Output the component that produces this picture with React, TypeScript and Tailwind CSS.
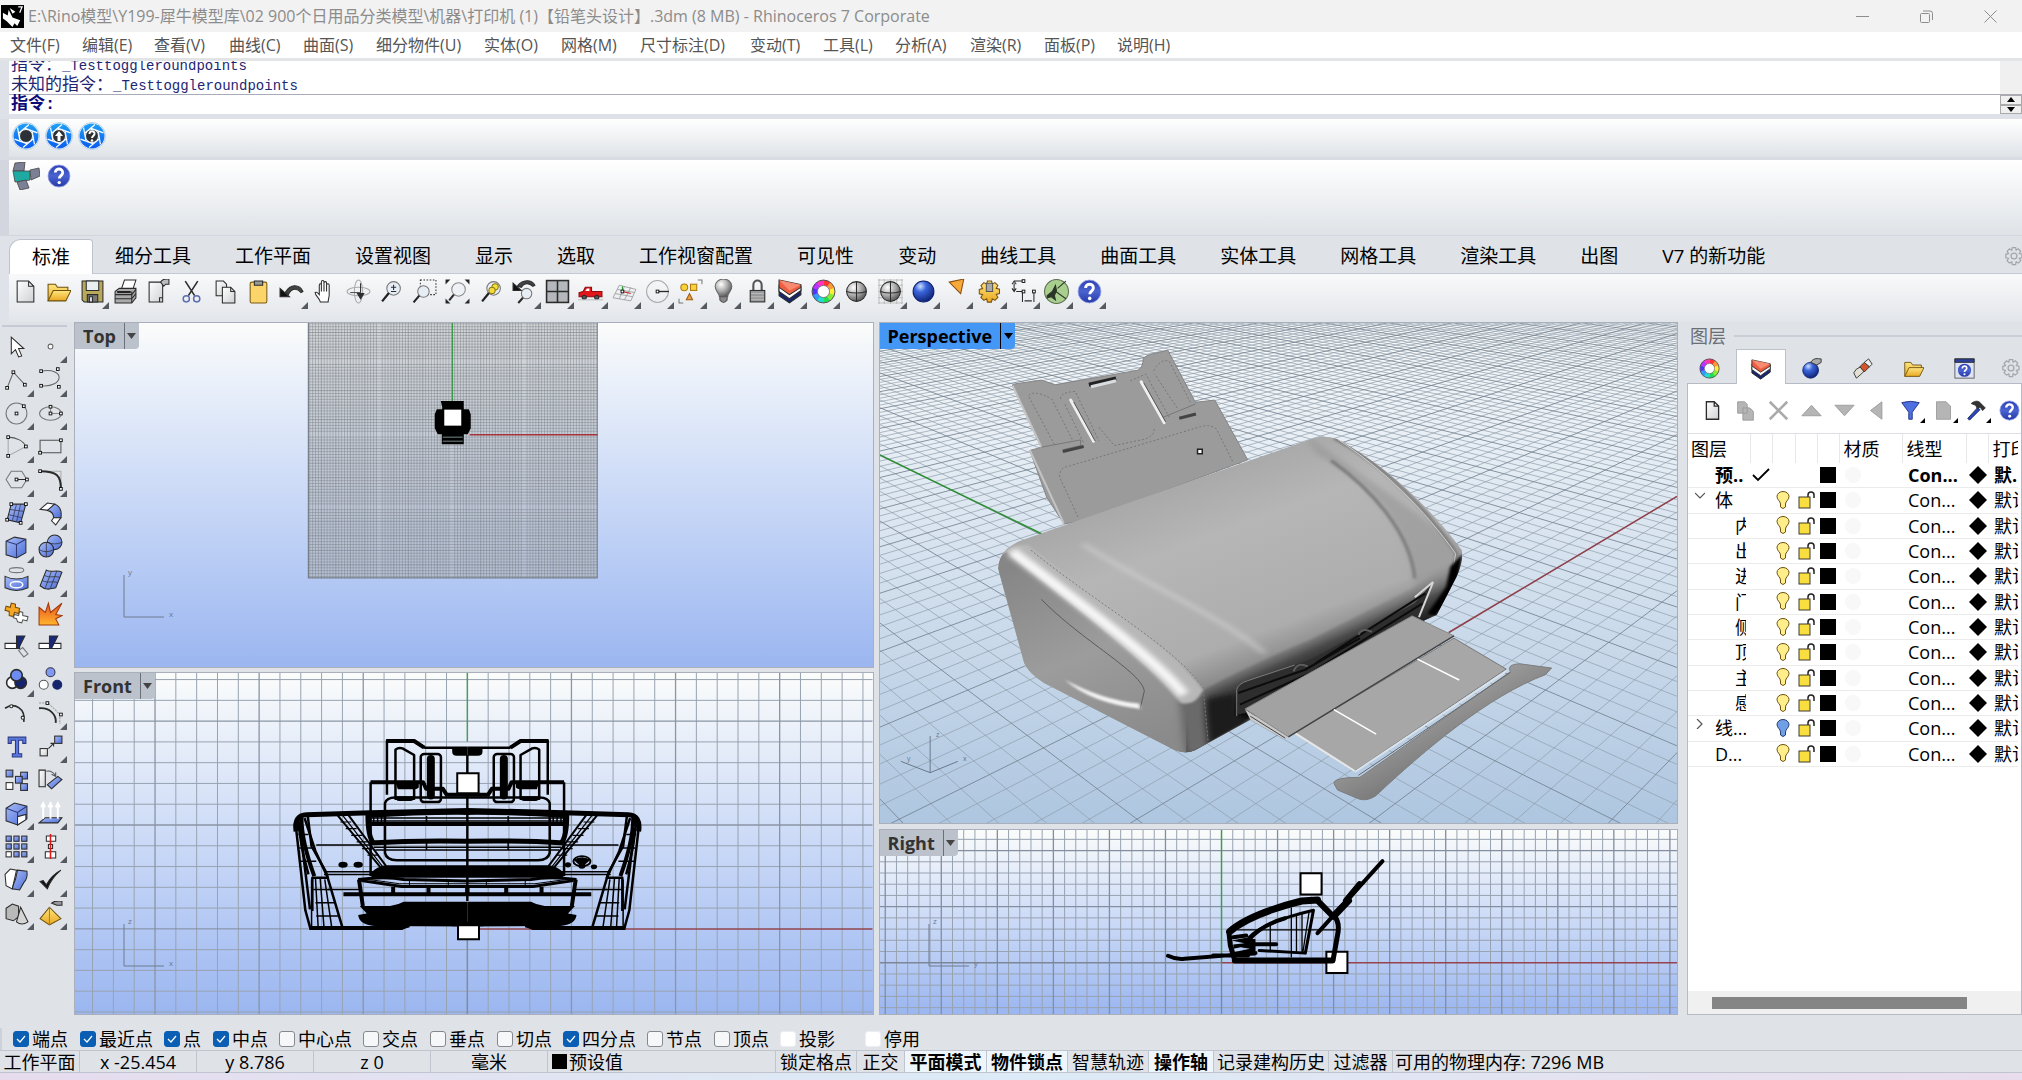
import React from "react";

type Kids = { children?: React.ReactNode };

const INK = "#3a3a3a";
const OUTLINE = "#2b2b2b";

/* ---------- icon helpers ---------- */

function Ic({ children, size = 26 }: Kids & { size?: number }) {
  return (
    <svg width={size} height={size} viewBox="0 0 24 24" fill="none" stroke={OUTLINE} strokeWidth="1" aria-hidden="true">
      {children}
    </svg>
  );
}

function N({ x, y }: { x: number; y: number }) {
  return <rect x={x - 1.3} y={y - 1.3} width="2.6" height="2.6" fill="#fff" stroke="#111" strokeWidth="0.9" />;
}

function SharedDefs() {
  return (
    <svg className="absolute size-0" aria-hidden="true">
      <defs>
        <linearGradient id="paper" x1="0" y1="0" x2="1" y2="1">
          <stop offset="0" stopColor="#fff" />
          <stop offset="1" stopColor="#cfd1d4" />
        </linearGradient>
        <linearGradient id="gold" x1="0" y1="0" x2="0" y2="1">
          <stop offset="0" stopColor="#ffe680" />
          <stop offset="1" stopColor="#e9a820" />
        </linearGradient>
        <linearGradient id="blue" x1="0" y1="0" x2="1" y2="1">
          <stop offset="0" stopColor="#a9bdf7" />
          <stop offset="1" stopColor="#4b6cd8" />
        </linearGradient>
        <linearGradient id="fire" x1="0" y1="0" x2="0" y2="1">
          <stop offset="0" stopColor="#e8501c" />
          <stop offset="1" stopColor="#ffb52e" />
        </linearGradient>
        <radialGradient id="ball" cx="0.35" cy="0.3" r="0.8">
          <stop offset="0" stopColor="#fff" />
          <stop offset="0.5" stopColor="#a9a9a9" />
          <stop offset="1" stopColor="#444" />
        </radialGradient>
        <radialGradient id="blueball" cx="0.35" cy="0.25" r="0.8">
          <stop offset="0" stopColor="#cfe0ff" />
          <stop offset="0.35" stopColor="#3b66dd" />
          <stop offset="1" stopColor="#0c1f70" />
        </radialGradient>
        <linearGradient id="help" x1="0" y1="0" x2="0" y2="1">
          <stop offset="0" stopColor="#2c3fb4" />
          <stop offset="0.5" stopColor="#4a63cf" />
          <stop offset="1" stopColor="#2338a8" />
        </linearGradient>
        <linearGradient id="lens" x1="0" y1="0" x2="0" y2="1">
          <stop offset="0" stopColor="#1fa0f5" />
          <stop offset="1" stopColor="#0a5df0" />
        </linearGradient>
      </defs>
    </svg>
  );
}

const magnifier = (
  <>
    <circle cx="14" cy="9" r="6.5" fill="#e6edf5" stroke="#777" strokeWidth="1" />
    <path d="M9.5 13.5 3 21.5" stroke="#222" strokeWidth="2.2" />
  </>
);
const page = <path d="M4 2h11l5 5v15H4z M15 2v5h5" fill="url(#paper)" />;
const helpMark = (
  <>
    <circle cx="12" cy="12" r="11" fill="url(#help)" stroke="#9aa6e6" strokeWidth="0.8" />
    <path d="M8.3 8.6c0-5 7.6-4.6 7.4 0-.1 3-3.4 3-3.4 6" stroke="#fff" strokeWidth="2.8" />
    <circle cx="12.2" cy="18.6" r="1.7" fill="#fff" stroke="none" />
  </>
);
const layersMark = (
  <>
    <path d="M1 9v7l10 7 11-8V9z" fill="#18246e" />
    <path d="M1 6v6l10 7 11-8V7z" fill="#fff" />
    <path d="M1 1 22 5.500V8l-11 7L1 8z" fill="#ee5f42" />
    <path d="M1 1 22 5.500 11 11z" fill="#f98a72" stroke="none" />
  </>
);
const wheel = (
  <>
    {["#f33", "#f93", "#fe3", "#8e3", "#2d5", "#2dc", "#39f", "#53f", "#b3f", "#f3b"].map((c, i) => {
      const a = (i * Math.PI) / 5 - Math.PI / 2;
      const b = a + Math.PI / 5 + 0.05;
      const p = (t: number) => `${12 + 8.3 * Math.cos(t)} ${12 + 8.3 * Math.sin(t)}`;
      return <path key={c} d={`M${p(a)}A8.3 8.3 0 0 1 ${p(b)}`} stroke={c} strokeWidth="5" />;
    })}
    <circle cx="12" cy="12" r="11" stroke="#333" strokeWidth="0.8" />
    <circle cx="12" cy="12" r="5.8" fill="#fff" stroke="#555" strokeWidth="0.7" />
  </>
);
const folder = (
  <>
    <path d="M2 21V5h7l2 3h10v4" fill="url(#gold)" stroke="#6b5010" />
    <path d="M2 21 7 11h17l-5 10z" fill="url(#gold)" stroke="#6b5010" />
  </>
);
const sphere = (
  <>
    <circle cx="12" cy="12" r="9.5" fill="url(#ball)" />
    <path d="M12 2.5v19M2.5 12q9.5 3 19 0" />
  </>
);
const gearTeeth = "M10 2h4l.6 3 2.6-1.6 2.8 2.8L18.400 9l3.200.8v4.200l-3.200.8 1.700 2.800-2.900 2.900L14.600 19l-.7 3.200H10L9.300 19l-2.700 1.500-2.900-2.800L5.400 15 2.200 14.200V10l3.200-.8L3.800 6.300l2.800-2.900L9.300 5z";

const standardIcons: { name: string; menu?: boolean; art: React.ReactNode }[] = [
  { name: "新建", art: page },
  { name: "打开", art: folder },
  { name: "保存", menu: true, art: <><path d="M2 2h20v20H4l-2-2z" fill="#b8a85a" /><path d="M6 2h12v9H6z" fill="#e8edf0" /><path d="M7 15h10v7H7z" fill="#777" /><path d="M9 17h3v5H9z" fill="#ddd" /></> },
  { name: "打印", art: <><path d="M8 10 11 1h11l-3 9z" fill="#fff" /><path d="M2 12 6 9h16v9l-4 5H2z" fill="#aaa" /><path d="M2 15h16l4-5M2 19h16l4-5M18 12v11" /><path d="M4 12.500h13" stroke="#222" strokeWidth="2" /></> },
  { name: "导出", art: <><path d="M3 3h13v19H3z" fill="url(#paper)" /><path d="M13 22v-4h3" /><path d="M14 3c2-4 6-3 8-3v5h-3l-2 2z" fill="#bbb" /></> },
  { name: "剪切", art: <><path d="M6 2l9 14M18 2 9 16" strokeWidth="1.500" /><circle cx="7" cy="19" r="3" stroke="#5c6cae" strokeWidth="1.400" /><circle cx="17" cy="19" r="3" stroke="#5c6cae" strokeWidth="1.400" /></> },
  { name: "复制", art: <><path d="M3 2h7l3 3v11H3z" fill="url(#paper)" /><path d="M9 8h8l4 4v11H9z" fill="url(#paper)" /><path d="M17 8v4h4" /></> },
  { name: "粘贴", art: <><rect x="4" y="3" width="16" height="20" rx="1.500" fill="#fbd569" stroke="#7a5a10" /><path d="M8 6V2h8v4z" fill="#999" /></> },
  { name: "撤销", menu: true, art: <><path d="M6 13c5-9 14-8 17-1l-2 1c-4-5-9-4-12 2z" fill="#444" /><path d="M1 9v8h9z" fill="#111" /></> },
  { name: "平移", art: <path d="M8 22c-1-4-5-6-5-9 2-1 3 1 4 2V6c0-2 2-2 2 0V3c0-2 2.500-2 2.500 0v1c0-2 2.500-2 2.500 0v2c0-2 2.500-2 2.500 0v9c0 3-1 4-1 7zM9 6v6M11.500 4v8M14 6v6" fill="#fff" /> },
  { name: "旋转", art: <><ellipse cx="12" cy="12" rx="4" ry="11" stroke="#aaa" /><ellipse cx="12" cy="12" rx="11" ry="4" stroke="#aaa" /><path d="M14 4v12M11 14l3 5 3-5z" fill="#333" /><path d="M4 13h10" stroke="#555" /></> },
  { name: "缩放", art: <>{magnifier}<path d="M14 5.500v5M11.500 8h5M11.500 12h5" /></> },
  { name: "框选缩放", art: <><rect x="8" y="1" width="15" height="14" strokeDasharray="1.500 1.500" /><circle cx="11" cy="12" r="5.500" fill="#e6edf5" stroke="#777" /><path d="M7 16 1.500 22.500" stroke="#222" strokeWidth="2" /></> },
  { name: "缩放至最大范围", art: <><circle cx="13" cy="10" r="6.500" fill="#eef2f6" stroke="#888" /><path d="M8.500 15 4 20.500" strokeWidth="2" /><path d="M1 4V1h3zM20 1h3v3zM1 20v3h3zM23 20v3h-3z" fill="#111" /></> },
  { name: "缩放至选取", art: <>{magnifier}<circle cx="15.500" cy="7.500" r="3" fill="#f6e13a" stroke="#8a7a10" /><circle cx="12.500" cy="11" r="3" fill="#f6d93a" stroke="#8a7a10" /></> },
  { name: "撤销视图", menu: true, art: <><path d="M5 7c5-7 14-7 17-1l-2 1c-4-4-9-3-11 1z" fill="#444" /><path d="M1 4v7h8z" fill="#111" /><circle cx="14" cy="14" r="5" fill="#e6edf5" stroke="#777" /><path d="M10.500 18 6 23" strokeWidth="2" /></> },
  { name: "四视图", menu: true, art: <><rect x="1.500" y="1.500" width="21" height="21" fill="#b4b8bc" strokeWidth="1.500" /><path d="M12 2v20M2 12h20" strokeWidth="1.500" /></> },
  { name: "汽车", menu: true, art: <><path d="M1 17v-4l4-1 2-4h6v4h10v5z" fill="#e3161c" stroke="#8e0b0f" /><path d="M7 11.500 8.500 9H11v2.500z" fill="#fff" stroke="none" /><circle cx="6" cy="17.500" r="2" fill="#555" /><circle cx="18" cy="17.500" r="2" fill="#555" /><path d="M0 20h24" stroke="#bbb" /></> },
  { name: "工作平面", menu: true, art: <><path d="M1 18 7 6l16 4-5 11zM3 14l17 3M5 10l17 3M7 19l5-12M12 20l6-12" stroke="#999" strokeWidth="0.800" /><path d="M10 12V7" stroke="#1a9a2b" /><path d="M10 12l8 2" stroke="#c22" /><N x={10} y={12} /></> },
  { name: "选项", menu: true, art: <><circle cx="12" cy="12" r="10.500" stroke="#aaa" /><path d="M12 12h11" strokeWidth="1.300" /><N x={12} y={12} /></> },
  { name: "选取", menu: true, art: <><circle cx="6" cy="8" r="3.300" fill="#f7d23c" stroke="#b07a10" /><rect x="12" y="5" width="6" height="6" fill="#f7d23c" stroke="#b07a10" /><path d="M11 14l3 6H8z" fill="#eaa33c" stroke="#9a5a10" /><path d="M19 1h4v4M1 19v4h4" stroke="#777" /></> },
  { name: "隐藏", menu: true, art: <><path d="M8 17c0-4-4-5-4-10a8 7 0 0 1 16 0c0 5-4 6-4 10z" fill="url(#ball)" stroke="#666" /><path d="M8.500 17h7v3q-3.500 5-7 0z" fill="#888" stroke="#555" /></> },
  { name: "锁定", menu: true, art: <><path d="M8 11V6c0-6 8-6 8 0v5" strokeWidth="2" stroke="#555" /><rect x="5" y="11" width="14" height="11" fill="#999" /><path d="M6 14h12M6 17h12M6 20h12" stroke="#bbb" /></> },
  { name: "图层", menu: true, art: layersMark },
  { name: "颜色", menu: true, art: wheel },
  { name: "着色", art: sphere },
  { name: "网格着色", menu: true, art: <><path d="M0 1h24M0 6h24M0 12h24M0 18h24M0 23h24M1 0v24M6 0v24M12 0v24M18 0v24M23 0v24" stroke="#b5b5b5" strokeWidth="0.800" />{sphere}</> },
  { name: "渲染", menu: true, art: <circle cx="12" cy="12" r="10" fill="url(#blueball)" stroke="#0c1f70" /> },
  { name: "指向", menu: true, art: <path d="M5 3 19 0l-3 14z" fill="#f7a93a" stroke="#8a4d10" /> },
  { name: "设置", menu: true, art: <><path d={gearTeeth} fill="url(#gold)" stroke="#7a5210" /><path d="M9 4h6v8H9z" fill="#aaa" stroke="#555" /></> },
  { name: "尺寸标注", menu: true, art: <><path d="M3 2h9M3 12v-8M1 5l2-3 2 3M1 9l2 3 2-3M5 12h6v10M13 21h7M22 12v10" /><N x={12} y={2} /><N x={12} y={12} /><N x={22} y={12} /></> },
  { name: "Grasshopper", menu: true, art: <><circle cx="12" cy="12" r="11.500" fill="#a9cf8e" stroke="#5b6d50" /><path d="M13 9 21 2M10 11l11 8" stroke="#2c3628" /><path d="M3 16l5-4 3-6 1 5-2 5 1 4-4-3-4 1z" stroke="#2c3628" fill="#2c3628" /></> },
  { name: "说明", menu: true, art: helpMark },
];

const sideIcons: { name: string; menu?: boolean; art: React.ReactNode }[] = [
  { name: "选取", art: <path d="M7 3v16l4-4 3 7 3-1-3-7h5z" fill="#fff" /> },
  { name: "点", menu: true, art: <circle cx="12" cy="12" r="2.300" fill="#fff" stroke="#666" /> },
  { name: "多段线", menu: true, art: <><path d="M3 20 9 5l11 12" stroke="#666" /><N x={3} y={20} /><N x={9} y={5} /><N x={20} y={17} /></> },
  { name: "曲线", menu: true, art: <><path d="M3 4c24-4 22 16 0 14" stroke="#666" /><N x={3} y={4} /><N x={19} y={2} /><N x={3} y={18} /><N x={20} y={19} /></> },
  { name: "圆", menu: true, art: <><circle cx="12" cy="12" r="10" stroke="#777" /><N x={12} y={12} /><N x={19} y={5} /></> },
  { name: "椭圆", menu: true, art: <><ellipse cx="12" cy="12" rx="10.500" ry="6.500" stroke="#777" /><path d="M12 5.500V12h10" stroke="#888" /><N x={12} y={12} /><N x={12} y={5.5} /><N x={22} y={12} /></> },
  { name: "圆弧", menu: true, art: <><path d="M4 3c8 0 15 4 17 9" stroke="#555" /><path d="M21 12 4 21V3" stroke="#aaa" /><N x={4} y={3} /><N x={21} y={12} /><N x={4} y={21} /></> },
  { name: "矩形", menu: true, art: <><rect x="2" y="6" width="20" height="12" stroke="#555" /><N x={2} y={18} /><N x={22} y={6} /></> },
  { name: "多边形", menu: true, art: <><path d="M7 4h10l5 8-5 8H7l-5-8z" stroke="#777" /><path d="M12 12h10" /><N x={12} y={12} /><N x={22} y={12} /></> },
  { name: "圆角", menu: true, art: <><path d="M2 4h20v18" stroke="#aaa" /><path d="M2 4c16 0 20 4 20 17" strokeWidth="2" /><N x={2} y={4} /><N x={22} y={21} /></> },
  { name: "曲面", menu: true, art: <><path d="M7 3 21 3 16 21 3 18z" fill="url(#blue)" /><path d="M12 3 8 19M16 3l-4 17M5 8l14 2M4 13l13 3" stroke="#334" strokeWidth="0.700" /><N x={7} y={3} /><N x={21} y={3} /><N x={16} y={21} /><N x={3} y={18} /></> },
  { name: "放样", menu: true, art: <><path d="M2 8 9 2l7 1-6 6z" fill="#fff" /><path d="M9 9l7-6c5 2 7 7 6 13h-7c0-4-2-6-6-7z" fill="url(#blue)" /><path d="M15 16h7l-5 7-4-4z" fill="#fff" /></> },
  { name: "立方体", menu: true, art: <><path d="M2 7 10 3l11 2v13l-9 5-10-3z" fill="url(#blue)" /><path d="M2 7l10 3 9-5M12 10v13" stroke="#2c3a78" /></> },
  { name: "球体", menu: true, art: <><circle cx="16" cy="8" r="7" fill="url(#blue)" /><circle cx="8" cy="15" r="7" fill="url(#blue)" /><path d="M1 15q7 4 14 0M8 8v14M9 8q7 3 14 0" strokeWidth="0.700" /></> },
  { name: "投影", menu: true, art: <><ellipse cx="12" cy="3" rx="7" ry="2.400" stroke="#777" /><path d="M1 9q11 5 22 0v11q-11 5-22 0z" fill="url(#blue)" /><ellipse cx="12" cy="17" rx="6" ry="3" stroke="#fff" strokeWidth="1.500" /></> },
  { name: "网格面", menu: true, art: <><path d="M8 3c5 3 9-1 15 2l-6 15c-5 1-9 3-15-2z" fill="url(#blue)" /><path d="M6 8c6 3 9 0 15 2M4 13c6 3 9 0 15 2M13 4 7 20M18 4l-6 16" strokeWidth="0.700" /></> },
  { name: "布尔", art: <><path d="M2 5l4 1 1-4 4 1v3l4 1-1 5-4-1-1 4-4-1v-4l-4-1z" fill="#f5a623" stroke="#7a4b08" /><path d="M10 13l4 1 1-4 3 1v3l5 1-1 4-4-1-1 3-4-1-1-3-3-1z" fill="#fff" stroke="#555" /></> },
  { name: "炸开", art: <path d="M1 6l6 5 3-9 2 9L23 2l-6 11 6 1-6 3 3 6H1z" fill="url(#fire)" stroke="#a0390c" /> },
  { name: "修剪", art: <><path d="M1 9h14v5H1z" fill="#fff" /><path d="M12 2h8l-6 12h-2z" fill="#1a2a78" /><path d="M14 16l4-3 5 6-4 3z" stroke="#777" /></> },
  { name: "分割", art: <><path d="M1 9h21v5H1z" fill="#fff" /><path d="M11 2h8l-6 12h-2z" fill="#1a2a78" /></> },
  { name: "组合", menu: true, art: <><circle cx="8" cy="15" r="5.500" fill="#fff" strokeWidth="1.500" /><circle cx="16" cy="15" r="5.500" fill="#15246d" strokeWidth="1.500" /><circle cx="12" cy="8" r="5.500" fill="#6d8bf0" strokeWidth="1.500" /></> },
  { name: "群组", art: <><circle cx="12" cy="5" r="4.300" fill="#7f99f2" stroke="#334" /><circle cx="5.500" cy="17" r="4.300" fill="#fff" stroke="#555" /><circle cx="18.500" cy="17" r="4.300" fill="#15246d" stroke="#15246d" /></> },
  { name: "编辑点", art: <><path d="M1 7c9-6 20 0 18 13" strokeWidth="1.600" /><circle cx="7" cy="5" r="1.500" fill="#fff" /><circle cx="18" cy="16" r="1.500" fill="#fff" /></> },
  { name: "控制点", menu: true, art: <><path d="M1 7c10-1 17 6 16 14" strokeWidth="1.800" /><path d="M1 2h9l11 11v9" stroke="#999" strokeDasharray="2 1" /><N x={9} y={2} /><N x={22} y={13} /></> },
  { name: "文字", art: <path d="M4 3h17v6h-3V6h-4v13h3v3H8v-3h3V6H7v3H4z" fill="#5b79dd" stroke="#2a3a86" /> },
  { name: "移动", menu: true, art: <><rect x="2" y="14" width="7" height="7" fill="url(#paper)" /><rect x="16" y="2" width="7" height="7" fill="url(#blue)" /><path d="M10 14l5-5M12 9h3v3" /></> },
  { name: "复制物件", art: <><rect x="2" y="3" width="6.500" height="6.500" fill="url(#blue)" /><rect x="16" y="5" width="6.500" height="6.500" fill="url(#blue)" /><rect x="11" y="9" width="6.500" height="6.500" fill="url(#blue)" /><rect x="2" y="15" width="6.500" height="6.500" fill="#fff" /><rect x="16" y="16" width="6.500" height="6.500" fill="url(#blue)" /></> },
  { name: "旋转物件", art: <><path d="M1 3h6v16H1z" fill="url(#paper)" /><path d="M9 17 19 9l4 3-10 9z" fill="url(#blue)" /><path d="M8 4q6-1 9 5M13 7l4 2v-4" stroke="#555" /></> },
  { name: "实体编辑", menu: true, art: <><path d="M2 7 10 2l12 3v12l-9 6-11-4z" fill="url(#blue)" /><path d="M2 7l11 4 9-6M13 11v4" stroke="#2c3a78" /><path d="M13 15l8-2v5l-8 5z" fill="#fff" /></> },
  { name: "曲面编辑", menu: true, art: <><path d="M1 21 7 16h16l-4 5z" fill="url(#blue)" /><path d="M5 17V3M12 17V3M19 17V3M3 6l2-4 2 4M10 6l2-4 2 4M17 6l2-4 2 4" stroke="#fff" strokeWidth="1.800" /></> },
  { name: "阵列", menu: true, art: <>{[2, 9.5, 17].map((y) => [2, 9.5, 17].map((x) => <rect key={`${x}${y}`} x={x} y={y} width="5" height="5" fill={x === 2 && y === 17 ? "#fff" : "url(#blue)"} />))}</> },
  { name: "对齐", menu: true, art: <><path d="M8 2h9v5H8zM7 17h10v6H7zM10 10h4v4h-4z" fill="#fff" /><path d="M12 0v24" stroke="#e01818" strokeWidth="1.500" /></> },
  { name: "变形", menu: true, art: <><path d="M1 7l5-5 6 1-4 18-6-3z" fill="#fff" /><path d="M13 3l9 1q1 7-3 11l-4 7-7-1q1-5 3-9z" fill="url(#blue)" /></> },
  { name: "检查", menu: true, art: <path d="M2 14l3-1 3 4C12 10 16 6 22 3c-6 5-10 10-13 18z" fill="#111" /> },
  { name: "实体工具", menu: true, art: <><path d="M2 7l6-4 6 2v10l-5 4-7-2z" fill="#b9b9b9" /><path d="M16 6l7 14q-6 4-11 0z" fill="#d5d5d5" /></> },
  { name: "棱锥", menu: true, art: <><path d="M11 6 22 17 11 23 2 17z" fill="url(#gold)" stroke="#6b5010" /><path d="M11 6v17" stroke="#a7831f" /><path d="M13 2c4-3 7-2 10-2v4h-5z" fill="#999" /></> },
];

function ToolButton({ name, menu, art }: { name: string; menu?: boolean; art: React.ReactNode }) {
  return (
    <button type="button" aria-label={name} className="relative flex min-w-0 flex-1 items-center justify-center">
      <Ic size={25}>{art}</Ic>
      {menu && (
        <svg className="absolute right-0 bottom-0" width="7" height="7" viewBox="0 0 7 7" aria-hidden="true">
          <path d="M7 0v7H0z" fill="#555a60" />
        </svg>
      )}
    </button>
  );
}

/* ---------- top bars ---------- */

function TitleBar() {
  return (
    <header className="flex h-8 shrink-0 items-center bg-[#f2f2f2] text-[#8c8c8c]">
      <svg className="ml-px shrink-0" width="23" height="23" viewBox="0 0 24 24" aria-hidden="true">
        <rect width="24" height="24" fill="#000" />
        <path d="M2 8l5 3 1-6 4 8 8 3-3 6-3-3-2 4-6-6-4-3z" fill="#fff" />
        <path d="M9 3l3 6 3-2z" fill="#fff" />
        <path d="M18 2h4l-2.500 6" stroke="#fff" strokeWidth="1.300" fill="none" />
      </svg>
      <h1 className="ml-1 flex-1 truncate text-base font-normal">
        E:\Rino模型\Y199-犀牛模型库\02 900个日用品分类模型\机器\打印机 (1)【铅笔头设计】.3dm (8 MB) - Rhinoceros 7 Corporate
      </h1>
      <button type="button" aria-label="最小化" className="flex h-8 w-16 items-center justify-center">
        <svg width="13" height="13" viewBox="0 0 13 13" stroke="#8c8c8c"><path d="M0 6.500h13" /></svg>
      </button>
      <button type="button" aria-label="还原" className="flex h-8 w-16 items-center justify-center">
        <svg width="13" height="13" viewBox="0 0 13 13" fill="none" stroke="#8c8c8c"><rect x="0.500" y="3.500" width="9" height="9" rx="1" /><path d="M3 1h7q2.500 0 2.500 2.500V10" /></svg>
      </button>
      <button type="button" aria-label="关闭" className="flex h-8 w-16 items-center justify-center">
        <svg width="13" height="13" viewBox="0 0 13 13" stroke="#8c8c8c"><path d="M.5.5l12 12M12.500.5l-12 12" /></svg>
      </button>
    </header>
  );
}

const menus = [
  ["文件(F)", "w-[72px]"], ["编辑(E)", "w-[72px]"], ["查看(V)", "w-[75px]"], ["曲线(C)", "w-[74px]"], ["曲面(S)", "w-[73px]"],
  ["细分物件(U)", "w-[108px]"], ["实体(O)", "w-[77px]"], ["网格(M)", "w-[79px]"], ["尺寸标注(D)", "w-[110px]"], ["变动(T)", "w-[73px]"],
  ["工具(L)", "w-[72px]"], ["分析(A)", "w-[75px]"], ["渲染(R)", "w-[74px]"], ["面板(P)", "w-[73px]"], ["说明(H)", "w-[73px]"],
];

function MenuBar() {
  return (
    <nav className="flex h-[29px] shrink-0 items-center border-b-3 border-[#e2e4e6] bg-white pl-[10px] text-base text-[#555]">
      {menus.map(([label, width]) => (
        <button key={label} type="button" className={`${width} shrink-0 text-left whitespace-nowrap`}>{label}</button>
      ))}
    </nav>
  );
}

function CommandArea() {
  return (
    <section className="shrink-0 border-b-5 border-l-[9px] border-[#dfe1e8] bg-white font-['Liberation_Mono','Noto_Sans_CJK_SC',monospace] text-[#1d2673]">
      <div className="flex h-[34px] border-b border-[#a9acb8]">
        <div className="flex flex-1 flex-col justify-end overflow-hidden pl-0.5">
          <p className="h-5 shrink-0 text-[14px] leading-6"><span className="text-[17px]">指令：</span>_Testtoggleroundpoints</p>
          <p className="h-5 shrink-0 text-[14px] leading-6"><span className="text-[17px]">未知的指令：</span>_Testtoggleroundpoints</p>
        </div>
        <div className="w-[22px] bg-[#f0f0f0]" />
      </div>
      <div className="flex h-[19px] items-center">
        <label htmlFor="command" className="pl-0.5 text-[17px] leading-5 font-bold text-[#0b0b78]">指令:</label>
        <input id="command" type="text" className="h-full min-w-0 flex-1 pl-2 text-[14px] outline-none" />
        <div className="flex h-full w-[22px] flex-col bg-[#f0f0f0]">
          <button type="button" aria-label="向上" className="flex flex-1 items-center justify-center border border-[#aaa]"><svg width="8" height="5" viewBox="0 0 8 5"><path d="M4 0l4 5H0z" /></svg></button>
          <button type="button" aria-label="向下" className="flex flex-1 items-center justify-center border border-[#aaa]"><svg width="8" height="5" viewBox="0 0 8 5"><path d="M4 5 0 0h8z" /></svg></button>
        </div>
      </div>
    </section>
  );
}

function Aperture({ name, children }: Kids & { name: string }) {
  return (
    <button type="button" aria-label={name} className="flex w-[33px] items-center justify-center">
      <svg width="28" height="28" viewBox="0 0 28 28" aria-hidden="true">
        <circle cx="14" cy="14" r="13.500" fill="#fff" stroke="#b9cfe6" />
        <circle cx="14" cy="14" r="12.500" fill="url(#lens)" />
        <g stroke="#fff" strokeWidth="1.200">
          {[0, 60, 120, 180, 240, 300].map((a) => <path key={a} d="M7 11 17 2.500" transform={`rotate(${a} 14 14)`} />)}
        </g>
        <circle cx="14" cy="14" r="6.500" fill="#2d3034" stroke="#fff" />
        {children}
      </svg>
    </button>
  );
}

function PluginBars() {
  return (
    <>
      <div className="flex h-[41px] shrink-0 border-b-3 border-l-[9px] border-[#d9dce2] bg-linear-to-b from-white to-[#dfe3e7] pb-1">
        <Aperture name="渲染器" />
        <Aperture name="上传"><path d="M14 9l4 5h-2.500v5h-3v-5H10z" fill="#fff" /></Aperture>
        <Aperture name="帮助"><path d="M11.500 12c0-4 5.500-3.500 5 0-.5 2-2.500 2-2.500 4" stroke="#fff" strokeWidth="2" fill="none" /><circle cx="14" cy="18.500" r="1.200" fill="#fff" /></Aperture>
      </div>
      <div className="flex h-[76px] shrink-0 items-start border-b border-l-[9px] border-[#d3d6df] bg-linear-to-b from-white to-[#dfe3e7]">
        <button type="button" aria-label="展开" className="flex h-8 w-[33px] items-center justify-center">
          <svg width="28" height="28" viewBox="0 0 28 28" stroke="#444" strokeWidth="0.800" aria-hidden="true">
            <path d="M3 1l10-1-1 9H1z" fill="#7c8095" /><path d="M1 9h17v9L3 20z" fill="#1eaaa3" /><path d="M18 8l9-2 1 8-9 4z" fill="#7c8095" /><path d="M5 20l9-2 3 8-9 2z" fill="#7c8095" />
          </svg>
        </button>
        <button type="button" aria-label="说明" className="flex h-8 w-[33px] items-center justify-center"><Ic size={24}>{helpMark}</Ic></button>
      </div>
    </>
  );
}

const tabs = ["标准", "细分工具", "工作平面", "设置视图", "显示", "选取", "工作视窗配置", "可见性", "变动", "曲线工具", "曲面工具", "实体工具", "网格工具", "渲染工具", "出图", "V7 的新功能"];

function GearOutline() {
  return (
    <svg className="shrink-0" width="20" height="20" viewBox="0 0 24 24" fill="none" stroke="#a3a7ad" strokeWidth="1.500" aria-hidden="true">
      <path d={gearTeeth} /><circle cx="12" cy="12" r="3.500" />
    </svg>
  );
}

function StandardToolbar() {
  return (
    <section className="shrink-0 border-l-[9px] border-[#dfe2e8]">
      <div className="flex h-[38px] items-end border-b border-[#c3c8d1]">
        <div role="tablist" className="flex flex-1 text-[19px] text-black">
          {tabs.map((t, i) => (
            <button
              key={t}
              type="button"
              role="tab"
              aria-selected={i === 0}
              className={i === 0
                ? "-mb-px h-[35px] rounded-tl-xl rounded-tr border border-b-0 border-[#bdc2cc] bg-white px-[22px] leading-[34px] whitespace-nowrap"
                : "h-[34px] px-[22px] leading-[34px] whitespace-nowrap"}
            >
              {t}
            </button>
          ))}
        </div>
        <button type="button" aria-label="选项" className="-mr-0.5 mb-[7px]"><GearOutline /></button>
      </div>
      <div className="h-[48px] bg-linear-to-b from-[#f8f9fa] to-[#e2e5ea]">
        <div role="toolbar" className="flex h-[35px] w-[1097px]">
          {standardIcons.map((i) => <ToolButton key={i.name} {...i} />)}
        </div>
      </div>
    </section>
  );
}

function SideToolbar() {
  return (
    <aside className="w-[74px] shrink-0 pt-[3px] pr-[7px]">
      <div className="mb-[3px] ml-0.5 h-0.5 bg-[#c6cad6]" />
      <div role="toolbar" className="grid h-[600px] grid-cols-2 grid-rows-18">
        {sideIcons.map((i) => <ToolButton key={i.name} {...i} />)}
      </div>
    </aside>
  );
}

/* ---------- viewports ---------- */

function Viewport({ title, grow, active, tone, children }: Kids & { title: string; grow: string; active?: boolean; tone: string }) {
  return (
    <section className={`${grow} ${tone} relative min-h-0 overflow-hidden border border-[#a9afbb]`}>
      {children}
      <div className={`${active ? "bg-[#4597f6]" : "bg-[#bcc2cc]"} absolute top-0 left-0 flex h-[26px] items-stretch rounded-br`}>
        <h2 className={`${active ? "text-black" : "text-[#333]"} px-2 text-lg leading-[26px] font-bold`}>{title}</h2>
        <button type="button" aria-label={`${title} 选项`} className={`${active ? "border-black" : "border-[#6b7078]"} flex w-[15px] items-center justify-center border-l`}>
          <svg width="9" height="6" viewBox="0 0 9 6" aria-hidden="true"><path d="M0 0h9L4.500 6z" fill={active ? "#000" : "#444"} /></svg>
        </button>
      </div>
    </section>
  );
}

const COOL = "bg-linear-to-b from-[#fbfcfb] to-[#9bb6f0]";

function gridPath(x0: number, y0: number, dx: number, dy: number, box: [number, number, number, number], major: boolean) {
  const [l, t, r, b] = box;
  let d = "";
  for (let k = Math.ceil((l - x0) / dx); x0 + k * dx <= r; k++) if ((k % 5 === 0) === major && k !== 0) d += `M${(x0 + k * dx).toFixed(1)} ${t}V${b}`;
  for (let k = Math.ceil((t - y0) / dy); y0 + k * dy <= b; k++) if ((k % 5 === 0) === major && k !== 0) d += `M${l} ${(y0 + k * dy).toFixed(1)}H${r}`;
  return d;
}

function AxisMark({ x, y, a, b }: { x: number; y: number; a: string; b: string }) {
  return (
    <svg className="absolute inset-0 size-full" aria-hidden="true">
      <path d={`M${x} ${y - 42}V${y}H${x + 40}`} fill="none" stroke="#6f7b90" />
      <text x={x + 4} y={y - 42} fontSize="8" fill="#6f7b90">{a}</text>
      <text x={x + 45} y={y} fontSize="8" fill="#6f7b90">{b}</text>
    </svg>
  );
}

function TopView() {
  const box: [number, number, number, number] = [233, 0, 523, 255];
  return (
    <>
      <svg className="absolute inset-0 size-full" viewBox="0 0 798 343" preserveAspectRatio="none" aria-hidden="true">
        <rect x="233" y="0" width="290" height="255" fill="#b4b7ba" fillOpacity="0.550" />
        <path d={gridPath(377, 111, 2.9, 2.9, box, false)} stroke="#7f868d" strokeWidth="0.500" />
        <path d={gridPath(377, 111, 14.5, 14.5, box, false)} stroke="#6d7378" strokeWidth="0.500" />
        <rect x="233.500" y="-1" width="289" height="255.500" fill="none" stroke="#6f7780" />
        <path d="M377.500 0V90" stroke="#3a9a48" strokeWidth="1.500" />
        <path d="M395 111.500H523" stroke="#a5343c" strokeWidth="1.500" />
        <path d="M366 78h23v8h5l2 5v14l-3 6h-4v10h-22v-10h-4l-3-6V91l2-5h6z" fill="#000" />
        <path d="M368 114h20M368 118h20" stroke="#9aa" strokeWidth="0.800" />
        <rect x="368.500" y="85.500" width="19" height="18" fill="#fff" stroke="#000" strokeWidth="2" />
      </svg>
      <AxisMark x={49} y={294} a="y" b="x" />
    </>
  );
}

function FrontHalf() {
  const p = { vectorEffect: "non-scaling-stroke" as const };
  return (
    <g fill="none" stroke="#000" strokeLinejoin="round">
      <path {...p} strokeWidth="2.500" d="M302 400V238H372L400 258H509" />
      <path {...p} strokeWidth="4" d="M300 238H372L398 258" />
      <path {...p} strokeWidth="2.500" d="M324 412V264q8-8 18-4L372 280V412z" />
      <rect {...p} strokeWidth="2.500" x="389" y="277" width="52" height="145" rx="9" />
      <path {...p} strokeWidth="8" strokeLinecap="round" d="M415 292V402" />
      <path {...p} strokeWidth="2.500" d="M260 645V362M260 362H395" />
      <path {...p} strokeWidth="4" d="M260 362H395L403 382H446L456 400H509" />
      <path fill="#000" stroke="none" d="M470 260H509V282H482q-12 0-12-12zM324 362H384V378q-4 5-10 5H330zM326 404H372V414q-6 5-10 5H334q-6 0-8-5z" />
      <path {...p} strokeWidth="2.500" d="M297 578V425q4-17 26-17H509M297 575q4 22 30 22H509" />
      <path {...p} strokeWidth="5" d="M68 510Q62 462 95 460L260 454 509 447" />
      <path {...p} strokeWidth="5" d="M253 460Q253 525 267 545" />
      <path {...p} strokeWidth="2.500" d="M68 500 92 748 105 803M78 500 104 745M98 462 108 555 145 632 187 798" />
      <path {...p} strokeWidth="4" d="M82 470Q82 540 115 645" />
      <path {...p} strokeWidth="2.500" d="M90 470 118 570 150 650H110V750M74 470Q76 540 100 640" />
      <path {...p} strokeWidth="1.500" d="M108 655V800M118 650 125 800M130 650 140 800M142 655 160 800M112 685H160M118 725H170M120 765H180M74 520H100M76 560H110M78 600H120" />
      <path {...p} strokeWidth="2" d="M175 462 285 618M202 460 300 615" />
      <path {...p} strokeWidth="1.200" d="M188 462 292 618M182 482H210M196 502H224M210 522H238M224 542H252M238 562H266M252 582H280" />
      <path {...p} strokeWidth="5" d="M260 462Q380 452 509 453" />
      <path {...p} strokeWidth="4" d="M256 488H509" />
      <path {...p} strokeWidth="1.500" d="M262 470H509M262 479H509M268 464V486M278 464V486M288 464V486M404 464V486M268 558H509M272 566H509M404 545V566M120 551H262M140 632H270M140 640H270M150 685H232" />
      <path {...p} strokeWidth="5" d="M258 545Q380 537 509 540" />
      <path fill="#000" stroke="none" d="M300 612H509V650H262V635Q275 615 300 612z" />
      <path {...p} strokeWidth="3" d="M228 655Q300 645 345 655L509 660M236 658 340 676H509" />
      <path {...p} strokeWidth="1" d="M260 656 335 668H509M360 656V676M460 660V676" />
      <path {...p} strokeWidth="4" d="M230 655 240 735M318 678V702M409 678V702M190 700H509M509 678V702" />
      <path fill="#000" stroke="none" d="M345 722H509V797L270 795Q230 790 228 762L250 758 232 735H310Q330 732 345 722z" />
      <path {...p} strokeWidth="4" d="M102 801H340Q350 795 360 793" />
      <path {...p} strokeWidth="2" d="M509 280V720" />
    </g>
  );
}

function FrontView() {
  const box: [number, number, number, number] = [-501, 33, 1552, 1062];
  const p = { vectorEffect: "non-scaling-stroke" as const };
  return (
    <>
      <svg className="absolute inset-0 size-full" viewBox="-501 33 2053 1029" preserveAspectRatio="none" aria-hidden="true">
        <path {...p} d={gridPath(509, 804, 53.6, 62.6, box, false)} stroke="#98a3b1" />
        <path {...p} d={gridPath(509, 804, 53.6, 62.6, box, true)} stroke="#8a95a5" strokeWidth="1.300" />
        <path {...p} d="M509 33V240" stroke="#4a9c5b" strokeWidth="1.500" />
        <path {...p} d="M509 804V1062" stroke="#808b9b" strokeWidth="1.500" />
        <path {...p} d="M-501 804H100" stroke="#808b9b" />
        <path {...p} d="M540 804H1552" stroke="#93444f" strokeWidth="1.500" />
        <FrontHalf />
        <g transform="translate(1018 0) scale(-1 1)"><FrontHalf /></g>
        <ellipse cx="189" cy="611" rx="12" ry="9" />
        <ellipse cx="228" cy="611" rx="12" ry="9" />
        <ellipse cx="804" cy="600" rx="22" ry="15" fill="none" stroke="#000" strokeWidth="5" />
        <path d="M782 596q22-16 44 0l-22 22z" />
        <ellipse cx="768" cy="611" rx="8" ry="8" />
        <ellipse cx="835" cy="617" rx="8" ry="7" />
        <ellipse cx="804" cy="614" rx="9" ry="9" />
        <rect {...p} x="483" y="335" width="55" height="60" fill="#fff" stroke="#000" strokeWidth="2" />
        <path {...p} d="M485 785V835H539V785z" fill="#fff" stroke="#000" strokeWidth="2" />
        <path {...p} d="M470 790H550" stroke="#000" strokeWidth="4" />
      </svg>
      <AxisMark x={49} y={293} a="z" b="x" />
    </>
  );
}

function RightView() {
  const box: [number, number, number, number] = [-597, 27, 1563, 582];
  const p = { vectorEffect: "non-scaling-stroke" as const };
  return (
    <>
      <svg className="absolute inset-0 size-full" viewBox="-597 27 2160 555" preserveAspectRatio="none" aria-hidden="true">
        <path {...p} d={gridPath(328, 427, 30.36, 33.8, box, false)} stroke="#98a3b1" />
        <path {...p} d={gridPath(328, 427, 30.36, 33.8, box, true)} stroke="#838e9e" strokeWidth="1.300" />
        <path {...p} d="M328 27V427" stroke="#3f9b50" strokeWidth="1.500" />
        <path {...p} d="M328 427V582M-597 427H328" stroke="#7b8696" strokeWidth="1.300" />
        <path {...p} d="M328 427H1563" stroke="#93444f" strokeWidth="1.500" />
        <rect {...p} x="542" y="157" width="57" height="64" fill="#fff" stroke="#000" strokeWidth="2" />
        <rect {...p} x="612" y="394" width="57" height="64" fill="#fff" stroke="#000" strokeWidth="2" />
        <g fill="none" stroke="#000" strokeLinejoin="round" strokeLinecap="round">
          <path {...p} strokeWidth="7" d="M350 333Q405 280 545 241L588 238" />
          <path {...p} strokeWidth="6" d="M590 242 630 287M364 420H628" />
          <path {...p} strokeWidth="5" d="M632 285Q650 305 642 345L630 420M348 335 352 375 364 420" />
          <path {...p} strokeWidth="4" d="M588 338 764 121" />
          <path {...p} strokeWidth="7" d="M632 286 672 240" />
          <path {...p} strokeWidth="6" d="M665 240 702 190" />
          <path {...p} strokeWidth="3" d="M402 352Q440 305 577 269L555 398 430 390" />
          <path {...p} strokeWidth="4" d="M404 355Q440 312 500 293M183 406Q205 418 228 415L420 398M305 405H400M360 350 395 345M420 371H476" />
          <path {...p} strokeWidth="1.300" d="M517 262V410M531 285V395M546 280V398M460 315V390M372 328H640M565 275 548 398" />
        </g>
        <path d="M355 360 395 352 420 356V405H360V395L405 385 380 380 360 385V372L390 368z" />
      </svg>
      <AxisMark x={49} y={136} a="z" b="y" />
    </>
  );
}

/* Both line families share their crossings on the y=1500 line and run to a vanishing point. */
function floorPath(vx: number, major: boolean) {
  const vy = -550;
  let d = "";
  for (let k = -120; k <= 140; k++) {
    if ((k % 5 === 0) !== major) continue;
    const x = 528 + 91 * k;
    const t = (1520 - vy) / (1500 - vy);
    const u = (0 - vy) / (1500 - vy);
    d += `M${(vx + (x - vx) * t).toFixed(1)} 1520L${(vx + (x - vx) * u).toFixed(1)} 0`;
  }
  return d;
}

function PerspectiveView() {
  const p = { vectorEffect: "non-scaling-stroke" as const };
  return (
    <>
      <svg className="absolute inset-0 size-full" viewBox="36 6 1527 1505" preserveAspectRatio="none" aria-hidden="true">
        <defs>
          <linearGradient id="lid" gradientUnits="userSpaceOnUse" x1="600" y1="450" x2="900" y2="960">
            <stop offset="0" stopColor="#a6a6a6" /><stop offset="0.350" stopColor="#b6b6b6" /><stop offset="0.850" stopColor="#adadad" /><stop offset="1" stopColor="#8b8b8b" />
          </linearGradient>
          <linearGradient id="end" gradientUnits="userSpaceOnUse" x1="270" y1="750" x2="600" y2="1250">
            <stop offset="0" stopColor="#868686" /><stop offset="0.500" stopColor="#9c9c9c" /><stop offset="1" stopColor="#8a8a8a" />
          </linearGradient>
          <linearGradient id="face" gradientUnits="userSpaceOnUse" x1="850" y1="915" x2="930" y2="1030">
            <stop offset="0" stopColor="#999" stopOpacity="0" /><stop offset="0.500" stopColor="#4a4a4a" /><stop offset="1" stopColor="#0a0a0a" />
          </linearGradient>
          <linearGradient id="flap" gradientUnits="userSpaceOnUse" x1="1080" y1="1180" x2="1160" y2="1270">
            <stop offset="0" stopColor="#9a9a9a" /><stop offset="1" stopColor="#7d7d7d" />
          </linearGradient>
          <filter id="soft" x="-20%" y="-20%" width="140%" height="140%"><feGaussianBlur stdDeviation="7" /></filter>
          <filter id="softer" x="-20%" y="-20%" width="140%" height="140%"><feGaussianBlur stdDeviation="3" /></filter>
          <clipPath id="shell"><path d="M262 745C264 700 280 680 302 663L868 352Q890 344 912 356C1000 430 1090 560 1150 690Q1154 720 1140 770L1102 885 1080 900 740 1205 640 1292Q622 1306 600 1292L350 1090Q320 1060 312 1030Z" /></clipPath>
        </defs>
        <g fill="none" stroke="#8f9daa">
          <path {...p} d={floorPath(2709, false) + floorPath(-1180, false)} strokeOpacity="0.700" />
          <path {...p} d={floorPath(2709, true) + floorPath(-1180, true)} stroke="#74828f" strokeOpacity="0.850" />
        </g>
        <path {...p} d="M36 404 360 652" stroke="#2f8f35" strokeWidth="1.500" />
        <path {...p} d="M1125 938 1562 528" stroke="#92404a" strokeWidth="1.500" />

        <path {...p} d="M290 195Q288 190 300 188L345 178 372 192 530 148Q540 140 540 112 545 105 555 100L587 88 640 245 677 238 740 418 420 605 388 610 355 530 323 390 345 380z" fill="#9b9b9b" stroke="#858585" />
        <path {...p} d="M323 390 388 610M290 195 345 380" stroke="#c4c4c4" strokeWidth="2" />
        <path {...p} d="M345 380 420 358V375L385 388M575 292 640 250" stroke="#777" fill="none" />
        <g fill="none" stroke="#757575" strokeDasharray="2 2">
          <path {...p} d="M415 590 380 470Q378 442 400 436L650 318Q668 310 680 325L712 425" />
          <path {...p} d="M370 372 320 225Q330 205 365 235L405 360M382 235Q380 215 410 212L455 360M425 365 390 250M515 180 545 160 590 290M560 150Q575 110 590 122L632 250M605 262 562 160M455 320 485 375 545 355Q565 340 560 320" />
        </g>
        <path {...p} d="M401 238 445 362M536 183 580 306" stroke="#efefef" strokeWidth="3" strokeLinecap="round" />
        <path {...p} d="M407 244 448 362M541 186 583 304" stroke="#555" strokeWidth="1" />
        <path {...p} d="M436 192 488 173" stroke="#222" strokeWidth="4" />
        <path {...p} d="M440 198 488 180" stroke="#d7dde0" strokeWidth="3" />
        <path {...p} d="M386 393 426 378M609 293 641 280" stroke="#444" strokeWidth="3" />
        <rect {...p} x="644" y="386" width="9" height="14" fill="#fff" stroke="#222" strokeWidth="1.500" />

        <g clipPath="url(#shell)">
          <rect x="240" y="330" width="940" height="1000" fill="url(#lid)" />
          <path d="M850 340 1160 690 1140 780 1060 820C1060 640 990 500 870 400z" fill="#969696" fillOpacity="0.600" filter="url(#soft)" />
          <path {...p} d="M905 352C1000 430 1085 570 1140 700L1135 760 1085 900" stroke="#777" strokeWidth="3" fill="none" filter="url(#softer)" />
          <path {...p} d="M912 356C995 440 1080 570 1138 700L1130 790" stroke="#cfcfcf" fill="none" />
          <path d="M655 1110Q780 1010 860 960L1060 800 1150 700 1150 800 1085 905 620 1305 625 1130z" fill="url(#face)" filter="url(#softer)" />
          <path d="M660 1140 720 1120V1190L745 1200 640 1295 620 1300z" fill="#1c1c1c" filter="url(#soft)" />
          <path d="M1128 740 1152 700 1140 800 1100 890 1085 880 1120 800z" fill="#050505" filter="url(#softer)" />
          <path d="M262 745C264 705 275 695 285 695 400 850 560 1040 608 1140Q625 1170 622 1310L340 1100 300 1030Z" fill="url(#end)" />
          <path d="M608 1140Q640 1150 655 1110L665 1290 620 1310z" fill="#6a6a6a" filter="url(#soft)" />
          <path d="M278 695Q290 670 320 675C420 800 600 990 655 1110Q640 1160 612 1150C560 1040 400 850 278 695z" fill="#b7b7b7" filter="url(#softer)" />
          <path {...p} d="M288 694C410 840 565 1020 618 1125" stroke="#fff" strokeWidth="10" strokeOpacity="0.900" fill="none" filter="url(#soft)" />
          <path {...p} d="M622 1150V1290" stroke="#8c8c8c" strokeWidth="6" filter="url(#soft)" />
          <path {...p} d="M325 690C450 850 600 980 655 1105L665 1280" stroke="#7b7b7b" fill="none" strokeDasharray="2 2" />
          <path {...p} d="M425 672C540 790 690 890 772 1000" stroke="#d2d2d2" strokeWidth="4" strokeOpacity="0.700" fill="none" filter="url(#soft)" />
          <path {...p} d="M900 420C980 510 1052 640 1060 775" stroke="#777" strokeWidth="3" fill="none" filter="url(#softer)" />
          <path {...p} d="M345 838C420 960 540 1060 542 1115L534 1168" stroke="#5a5a5a" fill="none" />
          <path d="M390 1080Q440 1150 535 1168L532 1152Q460 1140 390 1080z" fill="#f4f4f4" filter="url(#softer)" />
          <path d="M720 1185V1110Q722 1092 740 1083L860 1020 1060 850 1095 786 1070 895 735 1180z" fill="#2e2e2e" />
          <path {...p} d="M722 1120 850 1050 955 955M725 1155 860 1060 1075 850M870 1030 1080 820" stroke="#0c0c0c" strokeWidth="2" fill="none" />
          <path {...p} d="M719 1190V1110Q722 1092 740 1083L830 1036" stroke="#7c7c7c" fill="none" />
          <path {...p} d="M1060 832 1095 786 1068 892" stroke="#d5d5d5" strokeWidth="2" fill="none" />
          <path {...p} d="M828 1055Q835 1025 855 1040M952 945Q958 922 978 936" stroke="#5c5c5c" strokeWidth="2" fill="none" />
        </g>
        <path d="M735 1170 818 1252 812 1260 745 1200z" fill="#c9c9c9" />
        <path {...p} d="M745 1190 812 1256" stroke="#444" />
        <path {...p} d="M830 1240 1135 955 1235 1048 945 1355z" fill="#a7a7a7" stroke="#777" />
        <path {...p} d="M830 1240 945 1355" stroke="#e8e8e8" strokeWidth="2" />
        <path {...p} d="M735 1168 1055 888 1135 948 818 1252z" fill="#a2a2a2" stroke="#888" />
        <path {...p} d="M818 1252 1135 948" stroke="#444" strokeWidth="1.500" />
        <path {...p} d="M1065 1018 1145 1081M905 1170 986 1244" stroke="#fff" strokeWidth="1.500" />
        <path {...p} d="M905 1392Q905 1374 955 1374L1243 1056Q1235 1034 1260 1032L1322 1045 1310 1065C1200 1130 1080 1290 985 1430Q965 1450 948 1436L912 1412z" fill="url(#flap)" stroke="#7c7c7c" />
        <path {...p} d="M945 1358 1235 1054" stroke="#dbe4ea" strokeWidth="2" />
        <path {...p} d="M952 1368 1243 1058" stroke="#666" />
        <path {...p} d="M132 1250V1360M132 1360 76 1326M132 1360 185 1326" stroke="#68788a" fill="none" />
      </svg>
      <svg className="absolute inset-0 size-full" aria-hidden="true">
        <text x="56" y="414" fontSize="7" fill="#68788a">z</text>
        <text x="27" y="438" fontSize="7" fill="#68788a">y</text>
        <text x="83" y="438" fontSize="7" fill="#68788a">x</text>
      </svg>
    </>
  );
}

/* ---------- layers panel ---------- */

const panelTabs: { name: string; art: React.ReactNode }[] = [
  { name: "属性", art: wheel },
  { name: "图层", art: layersMark },
  { name: "渲染", art: <><circle cx="11" cy="14" r="9" fill="url(#blueball)" stroke="#0c1f70" /><path d="M11 5c4-6 8-4 12-4v4l-5 3z" fill="#aaa" /></> },
  { name: "材质", art: <><path d="M2 17q2-5 8-7l4 5q-5 5-9 8z" fill="#e4e0d4" /><path d="M9 10l5-5 6 5-6 6z" fill="#d4552a" /><path d="M14 5l5-4 4 6-3 3z" fill="#eee" /></> },
  { name: "图库", art: folder },
  { name: "说明", art: <><rect x="1" y="1" width="22" height="22" fill="#dfe4f4" stroke="#555" /><path d="M1 1h22v4H1z" fill="#2b3f9a" /><circle cx="12" cy="14" r="7.500" fill="url(#help)" stroke="none" /><path d="M9.500 12c0-4 5.500-3.500 5 0-.3 2-2.500 2-2.500 4" stroke="#fff" strokeWidth="2" /><circle cx="12" cy="18.500" r="1.200" fill="#fff" stroke="none" /></> },
];

const GREY = { fill: "#b5b5b5", stroke: "#999" };
const panelTools: { name: string; menu?: boolean; art: React.ReactNode }[] = [
  { name: "新图层", art: <path d="M5 2h9l5 5v15H5z M14 2v5h5" fill="url(#paper)" strokeWidth="1.500" /> },
  { name: "新子图层", art: <path {...GREY} d="M3 2h8l3 3v10H3zM9 9h8l4 4v10H9z" /> },
  { name: "删除", art: <path d="M2 2l20 20M22 2 2 22" stroke="#aaa" strokeWidth="3" /> },
  { name: "上移", art: <path {...GREY} d="M12 6 23 18H1z" /> },
  { name: "下移", art: <path {...GREY} d="M12 18 1 6h22z" /> },
  { name: "左移", art: <path {...GREY} d="M4 12 17 2v20z" /> },
  { name: "过滤", menu: true, art: <path d="M2 3q10-3 20 0l-8 11v8h-4v-8z" fill="#4d6fe0" stroke="#1d2f80" /> },
  { name: "图层状态", menu: true, art: <path {...GREY} d="M4 2h11l5 5v15H4z" /> },
  { name: "工具", menu: true, art: <><path d="M13 9 2 21l2 2L16 11z" fill="#2b48c0" stroke="#111a50" /><path d="M6 4c5-4 9-3 11 0l5 5-3 3-3-4-3 2-2-4z" fill="#333" /></> },
  { name: "说明", art: helpMark },
];

const layers: { name: string; indent: string; bold?: boolean; toggle?: string; off?: boolean }[] = [
  { name: "预..", indent: "pl-[27px]", bold: true },
  { name: "体", indent: "pl-[27px]", toggle: "open" },
  ...["内", "出", "进", "门", "侧", "顶", "主", "感"].map((name) => ({ name, indent: "pl-[47px]" })),
  { name: "线...", indent: "pl-[27px]", toggle: "closed", off: true },
  { name: "D...", indent: "pl-[27px]" },
];

function Bulb({ off }: { off?: boolean }) {
  return (
    <svg width="14" height="19" viewBox="0 0 14 19" fill={off ? "#6f9fe6" : "#ffee8a"} stroke={off ? "#27406e" : "#6e5312"} aria-hidden="true">
      <path d="M4.500 13c0-3-3.500-4-3.500-7.500a6 5 0 0 1 12 0C13 9 9.500 10 9.500 13v3q-2.500 3-5 0z" />
    </svg>
  );
}

function OpenLock() {
  return (
    <svg width="17" height="18" viewBox="0 0 17 18" aria-hidden="true">
      <path d="M10 8V4q0-3 3-3t3 3v3" fill="none" stroke="#222" strokeWidth="1.500" />
      <rect x="1" y="6" width="11" height="11" fill="#f8de3e" stroke="#3e3a2c" />
    </svg>
  );
}

function LayersPanel() {
  return (
    <aside className="flex w-[335px] shrink-0 flex-col">
      <div className="flex h-[27px] shrink-0 items-center gap-2 pl-[3px]">
        <h2 className="text-lg leading-6 text-[#6a6e75]">图层</h2>
        <div className="h-0.5 flex-1 bg-[#c9cdd5]" />
      </div>
      <div role="tablist" className="flex h-[34px] shrink-0 items-stretch">
        {panelTabs.map((t, i) => (
          <button
            key={t.name}
            type="button"
            role="tab"
            aria-label={t.name}
            aria-selected={i === 1}
            className={i === 1
              ? "z-10 -mb-px flex w-[50px] items-center justify-center border border-b-0 border-[#bcc1cc] bg-white pt-1"
              : i === 0 ? "flex w-[49px] items-center justify-center pt-1 pr-1" : "flex w-[51px] items-center justify-center pt-1"}
          >
            <Ic size={21}>{t.art}</Ic>
          </button>
        ))}
        <button type="button" aria-label="面板选项" className="ml-[11px] flex items-center justify-center pt-1"><GearOutline /></button>
      </div>
      <div className="flex min-h-0 flex-1 flex-col border border-[#b5bac6] bg-white">
        <div role="toolbar" className="flex h-[50px] shrink-0 items-center overflow-hidden border-b border-[#dcdfe4] pt-1 pl-2">
          {panelTools.map((t) => (
            <button key={t.name} type="button" aria-label={t.name} className="relative flex h-6 w-[33px] shrink-0 items-center justify-center">
              <Ic size={21}>{t.art}</Ic>
              {t.menu && <svg className="absolute right-0.5 bottom-0" width="5" height="5" viewBox="0 0 5 5" aria-hidden="true"><path d="M5 0v5H0z" /></svg>}
            </button>
          ))}
        </div>
        <div className="flex-1 overflow-hidden">
          <table className="h-[333px] w-[330px] table-fixed border-collapse text-lg text-black">
            <thead>
              <tr className="h-[29px] text-left">
                <th scope="col" className="w-[62px] p-0 pl-[3px] font-normal">图层</th>
                <th scope="col" aria-label="当前" className="w-[22px] border-x border-[#e8e8e8] p-0" />
                <th scope="col" aria-label="打开" className="w-[23px] border-x border-[#e8e8e8] p-0" />
                <th scope="col" aria-label="锁定" className="w-[22px] border-x border-[#e8e8e8] p-0" />
                <th scope="col" aria-label="颜色" className="w-[22px] border-x border-[#e8e8e8] p-0" />
                <th scope="col" className="w-[63px] border-r border-[#e8e8e8] p-0 pl-1 font-normal">材质</th>
                <th scope="col" className="w-[64px] border-r border-[#e8e8e8] p-0 pl-1 font-normal">线型</th>
                <th scope="col" aria-label="打印颜色" className="w-[22px] border-r border-[#e8e8e8] p-0" />
                <th scope="col" className="overflow-hidden p-0 pl-1 font-normal whitespace-nowrap">打印</th>
              </tr>
            </thead>
            <tbody>
              {layers.map((l) => (
                <tr key={l.name} className={`${l.bold ? "font-bold" : ""} border-b border-[#ebebeb] leading-6`}>
                  <td className="relative p-0">
                    {l.toggle && (
                      <button type="button" aria-label="展开" className="absolute top-0 left-1 flex size-4 items-center justify-center">
                        <svg width="10" height="10" viewBox="0 0 10 10" fill="none" stroke="#555" strokeWidth="1.200"><path d={l.toggle === "open" ? "M0 2l5 5 5-5" : "M2 0l5 5-5 5"} /></svg>
                      </button>
                    )}
                    <div className={`${l.indent} h-6 w-[58px] overflow-hidden whitespace-nowrap`}>{l.name}</div>
                  </td>
                  <td className="overflow-visible p-0 pl-0.5">
                    {l.bold && <svg width="18" height="14" viewBox="0 0 18 14" fill="none" stroke="#000" strokeWidth="1.800"><path d="M1 7l5 5L17 1" /></svg>}
                  </td>
                  <td className="p-0 pl-1">{!l.bold && <Bulb off={l.off} />}</td>
                  <td className="p-0 pl-[3px]">{!l.bold && <OpenLock />}</td>
                  <td className="p-0"><div className="ml-[3px] size-4 bg-black" /></td>
                  <td className="p-0"><div className="ml-1.5 size-4 rounded-full bg-[#f8f8f8]" /></td>
                  <td className="overflow-hidden p-0 pl-1.5 whitespace-nowrap">Con...</td>
                  <td className="p-0"><svg width="18" height="18" viewBox="0 0 18 18" className="ml-[3px]"><path d="M9 0l9 9-9 9-9-9z" /></svg></td>
                  <td className="overflow-hidden p-0 pl-1.5 whitespace-nowrap">{l.bold ? "默." : "默认"}</td>
                </tr>
              ))}
            </tbody>
          </table>
        </div>
        <div className="flex h-[23px] shrink-0 items-center bg-[#f0f0f0] pr-[54px] pl-6">
          <div className="h-3 flex-1 bg-[#858585]" />
        </div>
      </div>
    </aside>
  );
}

/* ---------- bottom bars ---------- */

const snaps: { name: string; width: string; on?: boolean; disabled?: boolean }[] = [
  { name: "端点", width: "w-[67px]", on: true },
  { name: "最近点", width: "w-[84px]", on: true },
  { name: "点", width: "w-[49px]", on: true },
  { name: "中点", width: "w-[66px]", on: true },
  { name: "中心点", width: "w-[84px]" },
  { name: "交点", width: "w-[67px]" },
  { name: "垂点", width: "w-[67px]" },
  { name: "切点", width: "w-[66px]" },
  { name: "四分点", width: "w-[84px]", on: true },
  { name: "节点", width: "w-[67px]" },
  { name: "顶点", width: "w-[66px]" },
  { name: "投影", width: "w-[85px]", disabled: true },
  { name: "停用", width: "w-[85px]", disabled: true },
];

function SnapBar() {
  return (
    <div className="mt-[13px] flex h-[22px] shrink-0 items-center border-l-2 border-[#cdd1da] pl-[11px] text-lg text-black">
      {snaps.map((s) => (
        <label key={s.name} className={`${s.width} relative flex shrink-0 items-center gap-[3px] leading-[22px] whitespace-nowrap`}>
          <input
            type="checkbox"
            defaultChecked={s.on}
            className={s.disabled
              ? "size-4 shrink-0 appearance-none rounded-[3px] border border-[#eceef1] bg-white"
              : "peer size-4 shrink-0 appearance-none rounded-[3px] border border-[#85888d] bg-[#f6f7f8] checked:border-[#0a5fb4] checked:bg-[#0a5fb4]"}
          />
          <svg className="pointer-events-none absolute left-[3px] hidden peer-checked:block" width="10" height="8" viewBox="0 0 10 8" fill="none" stroke="#fff" strokeWidth="1.200" aria-hidden="true">
            <path d="M1 4l3 3 5-6" />
          </svg>
          {s.name}
        </label>
      ))}
    </div>
  );
}

const toggles: [string, string, boolean][] = [
  ["锁定格点", "w-[81px]", false], ["正交", "w-[48px]", false], ["平面模式", "w-[82px]", true], ["物件锁点", "w-[81px]", true],
  ["智慧轨迹", "w-[81px]", false], ["操作轴", "w-[65px]", true], ["记录建构历史", "w-[115px]", false], ["过滤器", "w-[64px]", false],
];

function StatusBar() {
  return (
    <footer className="flex h-[23px] shrink-0 items-stretch border-y border-[#bfc4ce] text-lg leading-[22px] whitespace-nowrap text-black">
      <span className="w-[80px] border-r border-[#bfc4ce] text-center">工作平面</span>
      <span className="w-[117px] border-r border-[#bfc4ce] text-center">x -25.454</span>
      <span className="w-[117px] border-r border-[#bfc4ce] text-center">y 8.786</span>
      <span className="w-[117px] border-r border-[#bfc4ce] text-center">z 0</span>
      <span className="w-[117px] border-r border-[#bfc4ce] text-center">毫米</span>
      <button type="button" className="flex w-[228px] items-center gap-0.5 border-r border-[#bfc4ce] pl-1"><span className="size-[15px] bg-black" />预设值</button>
      {toggles.map(([label, width, on]) => (
        <button key={label} type="button" aria-pressed={on} className={`${width} ${on ? "bg-[#eef5fb] font-bold" : ""} border-r border-[#bfc4ce] text-center`}>{label}</button>
      ))}
      <span className="flex-1 pl-0.5">可用的物理内存: 7296 MB</span>
    </footer>
  );
}

export default function App() {
  return (
    <div className="flex h-screen flex-col overflow-hidden bg-[#dfe3e8] font-['Open_Sans','Noto_Sans_CJK_SC',sans-serif]" style={{ color: INK }}>
      <SharedDefs />
      <TitleBar />
      <MenuBar />
      <CommandArea />
      <PluginBars />
      <StandardToolbar />
      <main className="flex min-h-0 flex-1">
        <SideToolbar />
        <div className="flex min-w-0 flex-1 gap-[5px]">
          <div className="flex min-w-0 flex-1 flex-col gap-[4px]">
            <Viewport title="Top" grow="flex-345" tone={COOL}><TopView /></Viewport>
            <Viewport title="Front" grow="flex-343" tone={COOL}><FrontView /></Viewport>
          </div>
          <div className="flex min-w-0 flex-1 flex-col gap-[5px]">
            <Viewport title="Perspective" grow="flex-502" active tone="bg-linear-to-b from-[#fafbfb] to-[#aec6e0]"><PerspectiveView /></Viewport>
            <Viewport title="Right" grow="flex-185" tone={COOL}><RightView /></Viewport>
          </div>
        </div>
        <div className="w-[9px] shrink-0" />
        <LayersPanel />
      </main>
      <SnapBar />
      <StatusBar />
      <div className="h-[7px] shrink-0 bg-linear-to-r from-[#e6dcee] via-[#dcebf7] to-[#e9dcec]" />
    </div>
  );
}
